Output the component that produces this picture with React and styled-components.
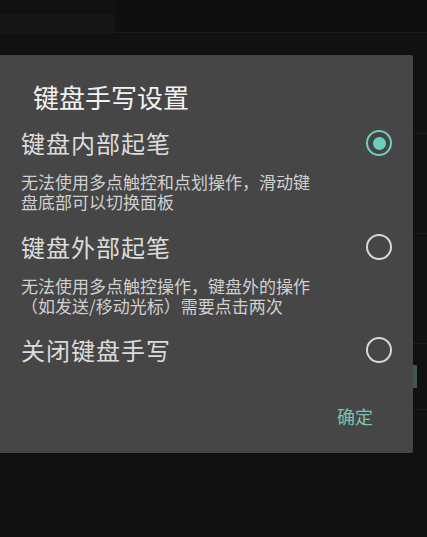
import React, { useState } from 'react';
import styled, { createGlobalStyle } from 'styled-components';

const GlobalStyle = createGlobalStyle`
  html, body {
    margin: 0;
    padding: 0;
    background: #111111;
  }
  body {
    font-family: "Noto Sans CJK SC", "Noto Sans", sans-serif;
  }
`;

const Screen = styled.div`
  position: relative;
  width: 427px;
  height: 537px;
  overflow: hidden;
  background: #111111;
`;

const BackList = styled.div`
  display: flex;
  flex-direction: column;
`;

const BackRow = styled.div`
  height: ${(p) => p.h}px;
  border-bottom: 1px solid #1d1d1d;
  display: flex;
  justify-content: flex-end;
  align-items: center;
`;

const TopBar = styled.div`
  height: 33px;
  display: flex;
`;

const TopLeft = styled.div`
  width: 115px;
  margin-top: 15px;
  background: #161616;
`;

const TopRight = styled.div`
  flex: 1;
  background: #0e0e0e;
  border-bottom: 1px solid #1d1d1d;
`;

const Accent = styled.div`
  width: 4px;
  height: 23px;
  margin-right: 10px;
  background: #3d5a54;
  border-radius: 1px;
`;

const Dialog = styled.div`
  position: absolute;
  left: 0;
  top: 55px;
  width: 413px;
  height: 398px;
  box-sizing: border-box;
  background: #464646;
  border-radius: 0 2px 2px 0;
  display: flex;
  flex-direction: column;
  padding: 25px 21px 25px 21px;
`;

const Title = styled.div`
  font-size: 26px;
  line-height: 33px;
  color: #f2f2f2;
  padding-left: 12px;
  margin-bottom: 15px;
`;

const Option = styled.div`
  display: flex;
  flex-direction: column;
  margin-bottom: ${(p) => p.gap}px;
  cursor: pointer;
`;

const OptionRow = styled.div`
  display: flex;
  align-items: center;
  justify-content: space-between;
  height: 30px;
`;

const Label = styled.span`
  font-size: 24px;
  line-height: 30px;
  color: #dcdcdc;
  letter-spacing: 1px;
`;

const Radio = styled.span`
  width: 26px;
  height: 26px;
  box-sizing: border-box;
  border-radius: 50%;
  border: 2.5px solid ${(p) => (p.checked ? '#6fcfbf' : '#d8d8d8')};
  display: flex;
  align-items: center;
  justify-content: center;

  &::after {
    content: '';
    width: 13px;
    height: 13px;
    border-radius: 50%;
    background: ${(p) => (p.checked ? '#6fcfbf' : 'transparent')};
  }
`;

const Desc = styled.div`
  margin-top: 14px;
  width: 300px;
  font-size: 17px;
  line-height: 20px;
  color: #d0d0d0;
`;

const Footer = styled.div`
  margin-top: auto;
  display: flex;
  justify-content: flex-end;
  padding-right: 19px;
`;

const OkButton = styled.button`
  background: none;
  border: none;
  padding: 0;
  font-family: inherit;
  font-size: 18px;
  line-height: 24px;
  color: #7cc3b2;
  cursor: pointer;
`;

const options = [
  {
    label: '键盘内部起笔',
    desc: '无法使用多点触控和点划操作，滑动键盘底部可以切换面板',
    gap: 20,
  },
  {
    label: '键盘外部起笔',
    desc: '无法使用多点触控操作，键盘外的操作（如发送/移动光标）需要点击两次',
    gap: 19,
  },
  { label: '关闭键盘手写', gap: 0 },
];

const App = () => {
  const [selected, setSelected] = useState(0);
  return (
    <Screen>
      <GlobalStyle />
      <BackList>
        <TopBar>
          <TopLeft />
          <TopRight />
        </TopBar>
        <BackRow h={100} />
        <BackRow h={99} />
        <BackRow h={109} />
        <BackRow h={65}>
          <Accent />
        </BackRow>
      </BackList>
      <Dialog>
        <Title>键盘手写设置</Title>
        {options.map((o, i) => (
          <Option key={o.label} gap={o.gap} onClick={() => setSelected(i)}>
            <OptionRow>
              <Label>{o.label}</Label>
              <Radio checked={selected === i} />
            </OptionRow>
            {o.desc && <Desc>{o.desc}</Desc>}
          </Option>
        ))}
        <Footer>
          <OkButton type="button">确定</OkButton>
        </Footer>
      </Dialog>
    </Screen>
  );
};

export default App;
